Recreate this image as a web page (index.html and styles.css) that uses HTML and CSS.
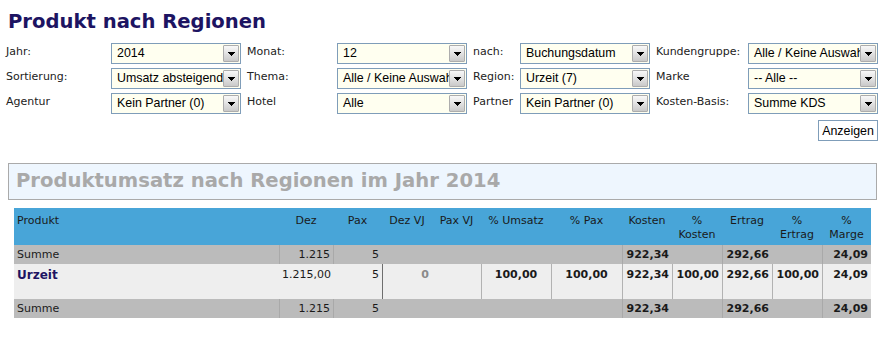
FILE: index.html
```html
<!DOCTYPE html>
<html lang="de">
<head>
<meta charset="utf-8">
<title>Produkt nach Regionen</title>
<link rel="stylesheet" href="styles.css">
</head>
<body>
<h1 class="title">Produkt nach Regionen</h1>

<div class="filters">
  <span class="lbl">Jahr:</span>
  <div class="sel"><span class="val">2014</span><span class="arr"><svg width="7" height="4" viewBox="0 0 7 4"><polygon points="0,0 7,0 3.5,4" fill="#000"/></svg></span></div>
  <span class="lbl">Monat:</span>
  <div class="sel"><span class="val">12</span><span class="arr"><svg width="7" height="4" viewBox="0 0 7 4"><polygon points="0,0 7,0 3.5,4" fill="#000"/></svg></span></div>
  <span class="lbl">nach:</span>
  <div class="sel"><span class="val">Buchungsdatum</span><span class="arr"><svg width="7" height="4" viewBox="0 0 7 4"><polygon points="0,0 7,0 3.5,4" fill="#000"/></svg></span></div>
  <span class="lbl">Kundengruppe:</span>
  <div class="sel"><span class="val">Alle / Keine Auswahl</span><span class="arr"><svg width="7" height="4" viewBox="0 0 7 4"><polygon points="0,0 7,0 3.5,4" fill="#000"/></svg></span></div>

  <span class="lbl">Sortierung:</span>
  <div class="sel"><span class="val">Umsatz absteigend</span><span class="arr"><svg width="7" height="4" viewBox="0 0 7 4"><polygon points="0,0 7,0 3.5,4" fill="#000"/></svg></span></div>
  <span class="lbl">Thema:</span>
  <div class="sel"><span class="val">Alle / Keine Auswahl</span><span class="arr"><svg width="7" height="4" viewBox="0 0 7 4"><polygon points="0,0 7,0 3.5,4" fill="#000"/></svg></span></div>
  <span class="lbl">Region:</span>
  <div class="sel"><span class="val">Urzeit (7)</span><span class="arr"><svg width="7" height="4" viewBox="0 0 7 4"><polygon points="0,0 7,0 3.5,4" fill="#000"/></svg></span></div>
  <span class="lbl">Marke</span>
  <div class="sel"><span class="val">-- Alle --</span><span class="arr"><svg width="7" height="4" viewBox="0 0 7 4"><polygon points="0,0 7,0 3.5,4" fill="#000"/></svg></span></div>

  <span class="lbl">Agentur</span>
  <div class="sel"><span class="val">Kein Partner (0)</span><span class="arr"><svg width="7" height="4" viewBox="0 0 7 4"><polygon points="0,0 7,0 3.5,4" fill="#000"/></svg></span></div>
  <span class="lbl">Hotel</span>
  <div class="sel"><span class="val">Alle</span><span class="arr"><svg width="7" height="4" viewBox="0 0 7 4"><polygon points="0,0 7,0 3.5,4" fill="#000"/></svg></span></div>
  <span class="lbl">Partner</span>
  <div class="sel"><span class="val">Kein Partner (0)</span><span class="arr"><svg width="7" height="4" viewBox="0 0 7 4"><polygon points="0,0 7,0 3.5,4" fill="#000"/></svg></span></div>
  <span class="lbl">Kosten-Basis:</span>
  <div class="sel"><span class="val">Summe KDS</span><span class="arr"><svg width="7" height="4" viewBox="0 0 7 4"><polygon points="0,0 7,0 3.5,4" fill="#000"/></svg></span></div>
</div>

<div class="actions"><button class="btn" type="button">Anzeigen</button></div>

<div class="panel"><h2 class="panel-title">Produktumsatz nach Regionen im Jahr 2014</h2></div>

<table class="report">
  <colgroup>
    <col class="c-prod"><col class="c-dez"><col class="c-pax"><col class="c-dvj"><col class="c-pvj">
    <col class="c-pu"><col class="c-pp"><col class="c-k"><col class="c-pk"><col class="c-e"><col class="c-pe"><col class="c-pm">
  </colgroup>
  <thead>
    <tr class="head">
      <th class="left">Produkt</th><th>Dez</th><th>Pax</th><th>Dez VJ</th><th>Pax VJ</th>
      <th>% Umsatz</th><th>% Pax</th><th>Kosten</th><th>%<br>Kosten</th><th>Ertrag</th><th>%<br>Ertrag</th><th>%<br>Marge</th>
    </tr>
  </thead>
  <tbody>
    <tr class="sum">
      <td>Summe</td><td class="num bl">1.215</td><td class="num bl">5</td><td></td><td></td><td></td><td></td>
      <td class="num b bl">922,34</td><td></td><td class="num b bl">292,66</td><td></td><td class="num b bl">24,09</td>
    </tr>
    <tr class="item">
      <td><a class="prod" href="#">Urzeit</a></td><td class="num">1.215,00</td><td class="num">5</td>
      <td class="num b muted bd">0</td><td></td>
      <td class="ctr b bl">100,00</td><td class="ctr b bl">100,00</td>
      <td class="num b bl">922,34</td><td class="num b bl">100,00</td><td class="num b bl">292,66</td><td class="num b bl">100,00</td><td class="num b bl">24,09</td>
    </tr>
    <tr class="sum">
      <td>Summe</td><td class="num bl">1.215</td><td class="num bl">5</td><td></td><td></td><td></td><td></td>
      <td class="num b bl">922,34</td><td></td><td class="num b bl">292,66</td><td></td><td class="num b bl">24,09</td>
    </tr>
  </tbody>
</table>
</body>
</html>
```

FILE: styles.css
```css
html, body {
  margin: 0;
  padding: 0;
  background: #ffffff;
}

body {
  font-family: "DejaVu Sans", Verdana, sans-serif;
  font-size: 11px;
  color: #1a1a1a;
}

.title {
  margin: 0;
  padding: 10px 0 0 8px;
  font-size: 19.6px;
  line-height: 24px;
  font-weight: bold;
  color: #1d1462;
}

.filters {
  display: grid;
  grid-template-columns: 111px 130px 96px 130px 53px 130px 98px 130px;
  grid-auto-rows: 21px;
  row-gap: 4px;
  margin-top: 9px;
}

.lbl {
  padding: 2px 0 0 6px;
  line-height: 14px;
  white-space: nowrap;
  color: #222;
}

.sel {
  box-sizing: border-box;
  width: 130px;
  height: 21px;
  border: 1px solid #7f9db9;
  background: #fffff0;
  display: flex;
  align-items: stretch;
}

.val {
  flex: 1;
  min-width: 0;
  overflow: hidden;
  white-space: nowrap;
  padding-left: 5px;
  font-family: "Liberation Sans", Arial, sans-serif;
  font-size: 12.4px;
  line-height: 19px;
  color: #000;
}

.arr {
  box-sizing: border-box;
  width: 16px;
  margin: 1px 1px 1px 0;
  border: 1px solid #adadad;
  border-radius: 1px;
  background: linear-gradient(#f8f8f8, #e2e2e2 50%, #c9c9c9);
  display: flex;
  align-items: center;
  justify-content: center;
}

.arr svg {
  display: block;
  shape-rendering: crispEdges;
}

.actions {
  width: 878px;
  display: flex;
  justify-content: flex-end;
  margin-top: 6px;
}

.btn {
  box-sizing: border-box;
  width: 60px;
  height: 21px;
  margin: 0;
  padding: 0;
  border: 1px solid #7f9db9;
  background: #ffffff;
  font-family: "Liberation Sans", Arial, sans-serif;
  font-size: 12.4px;
  color: #000;
}

.panel {
  box-sizing: border-box;
  margin: 22px 0 0 8px;
  width: 869px;
  height: 37px;
  border: 1px solid #aaaaaa;
  background: #eef6fe;
  padding: 5px 0 0 7px;
}

.panel-title {
  margin: 0;
  font-size: 19.6px;
  line-height: 24px;
  font-weight: bold;
  color: #a9a9a9;
  white-space: nowrap;
}

.report {
  margin: 8px 0 0 14px;
  width: 857px;
  table-layout: fixed;
  border-collapse: separate;
  border-spacing: 0;
}

.c-prod { width: 265px; }
.c-dez { width: 54px; }
.c-pax { width: 49px; }
.c-dvj { width: 50px; }
.c-pvj { width: 49px; }
.c-pu { width: 70px; }
.c-pp { width: 71px; }
.c-k { width: 50px; }
.c-pk { width: 50px; }
.c-e { width: 50px; }
.c-pe { width: 50px; }
.c-pm { width: 49px; }

.head {
  height: 37px;
  background: #48a5d8;
}

.head th {
  font-weight: normal;
  text-align: center;
  vertical-align: top;
  padding: 6px 0 3px;
  line-height: 14px;
  color: #1a1a1a;
  white-space: nowrap;
}

.head th.left {
  text-align: left;
  padding-left: 3px;
}

.report td {
  vertical-align: top;
  line-height: 14px;
  padding: 3px 3px 2px;
  white-space: nowrap;
  color: #1a1a1a;
}

.sum {
  height: 19px;
  background: #bbbbbb;
}

.item {
  height: 35px;
  background: #eeeeee;
}

.item td {
  padding-top: 4px;
}

.num { text-align: right; }
.ctr { text-align: center; }
.b { font-weight: bold; }
.muted { color: #8a8a8a !important; }

.sum .bl { box-shadow: inset 1px 0 #a9a9a9; }
.item .bl { box-shadow: inset 1px 0 #b2b2b2; }
.item .bd { box-shadow: inset 1px 0 #6e6e6e; }

.prod {
  font-size: 12px;
  font-weight: bold;
  color: #1d1462;
  text-decoration: none;
}
```
